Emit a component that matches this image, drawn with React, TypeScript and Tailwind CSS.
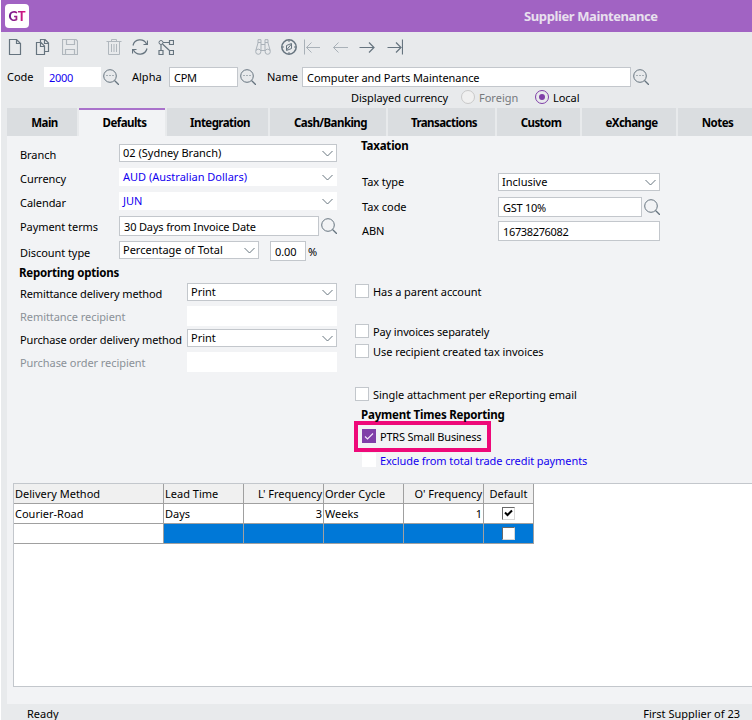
import type { ReactNode } from "react";

const Glyph = ({ children, className = "text-[#66747f]" }: { children: ReactNode; className?: string }) => (
  <svg viewBox="0 0 16 16" fill="none" stroke="currentColor" className={`h-4 w-4 shrink-0 ${className}`}>
    {children}
  </svg>
);

const SearchIcon = ({ dots = false, className = "" }: { dots?: boolean; className?: string }) => (
  <Glyph className={`text-[#66747f] ${className}`}>
    <circle cx="7" cy="7" r="6.3" />
    <path d="M11.5 11.5L16 16" strokeWidth="1.3" />
    {dots && <path d="M3.5 6.5h1M6.5 6.5h1M9.5 6.5h1" />}
  </Glyph>
);

const Label = ({ text, className = "" }: { text: string; className?: string }) => (
  <span className={`block h-4 shrink-0 leading-4 whitespace-nowrap ${className}`}>{text}</span>
);

const Heading = ({ text, className = "" }: { text: string; className?: string }) => (
  <h2 className={`h-4 text-[11.5px] leading-4 font-bold tracking-[-0.2px] whitespace-nowrap ${className}`}>{text}</h2>
);

const Select = ({ value, className = "" }: { value: string; className?: string }) => (
  <div className={`flex h-[18px] shrink-0 items-center justify-between border bg-white pr-[3px] pl-[3px] tracking-normal ${className}`}>
    <span className="leading-4 whitespace-nowrap">{value}</span>
    <svg viewBox="0 0 11 7" fill="none" stroke="#66747f" className="h-[7px] w-[11px]">
      <path d="M0.5 1L5.5 6L10.5 1" />
    </svg>
  </div>
);

const Input = ({ value = "", className = "" }: { value?: string; className?: string }) => (
  <div className={`flex h-5 shrink-0 items-center border bg-white pt-[2px] pl-1 whitespace-nowrap ${className}`}>{value}</div>
);

const Check = ({ text, className = "" }: { text: string; className?: string }) => (
  <div className={`flex h-3.5 gap-1 ${className}`}>
    <span className="h-3.5 w-3.5 shrink-0 border border-[#c3c7cc] bg-white" />
    <Label text={text} />
  </div>
);

const tabs = [
  { name: "Main", width: "w-[70px] pl-[5px]" },
  { name: "Defaults", width: "w-[86px] pl-[5px]" },
  { name: "Integration", width: "w-[101px] pl-[5px]" },
  { name: "Cash/Banking", width: "w-[116px] pl-[5px]" },
  { name: "Transactions", width: "w-[107px] pl-[5px]" },
  { name: "Custom", width: "w-[83px] pl-[5px]" },
  { name: "eXchange", width: "w-[94px] pl-[5px]" },
  { name: "Notes", width: "w-[74px] pl-[5px]" },
];

const Toolbar = () => (
  <div className="flex h-[35px] pt-[7px] pl-[6px]">
    <Glyph>
      <path d="M2.5 .5H9.5L13.5 4.5V15.5H2.5ZM9.5 .5V4.5H13.5" strokeWidth="1.2" />
    </Glyph>
    <Glyph className="ml-[11px] text-[#66747f]">
      <path d="M6.5 3.5V.5H11L14.5 4V12.5H10.5M10.5 .5V4.5H14.5M2.5 3.5H7L10.5 7V15.5H2.5ZM6.5 3.5V7.5H10.5" strokeWidth="1.2" />
    </Glyph>
    <Glyph className="ml-3 text-[#b0b7bd]">
      <path d="M.5 .5H14L15.5 2V15.5H.5ZM4.5 .5V5.5H12.5V.5M3.5 15.5V10.5H12.5V15.5" strokeWidth="1.2" />
    </Glyph>
    <Glyph className="ml-[28px] text-[#b0b7bd]">
      <path d="M.5 2.5H15.5M5.5 2.5V.5H10.5V2.5M2.5 2.5V15.5H13.5V2.5M5.5 5V13M8 5V13M10.5 5V13" />
    </Glyph>
    <Glyph className="ml-[10px] text-[#66747f]">
      <path d="M1 6.5A7.2 7.2 0 0 1 14.5 5M15.5 1.5V5.5H11.5M15 9.5A7.2 7.2 0 0 1 1.5 11M.5 14.5V10.5H4.5" strokeWidth="1.2" />
    </Glyph>
    <Glyph className="ml-[10px] text-[#66747f]">
      <circle cx="3" cy="3.5" r="2" />
      <path d="M5 3.5H11.5M11.5 1.5H15.5V5.5H11.5ZM3 5.5V11.5M1 11.5H5V15.5H1ZM4.5 5L12 12M11.5 11.5H15.5V15.5H11.5Z" strokeWidth="1.2" />
    </Glyph>
    <Glyph className="ml-[81px] text-[#a9b1b8]">
      <circle cx="3.3" cy="12.7" r="2.6" />
      <circle cx="12.7" cy="12.7" r="2.6" />
      <path d="M.8 11.5L3 4V.7H6V12M15.2 11.5L13 4V.7H10V12M6 5.5H10M6 11.5H10M3 3.5H6M10 3.5H13" />
    </Glyph>
    <Glyph className="ml-[10px] text-[#66747f]">
      <circle cx="8" cy="8" r="7.2" strokeWidth="1.5" />
      <path d="M5.5 6.5L10.5 4.5V9.5L5.5 11.5ZM5.5 11L10.5 5M8 1V3M8 13V15M1 8H3M13 8H15" />
    </Glyph>
    <Glyph className="ml-[7px] text-[#a9b1b8]">
      <path d="M.5 .5V15.5M16 8.5H2.5M7.5 3.5L2.5 8.5L7.5 13.5" />
    </Glyph>
    <Glyph className="ml-3 text-[#a9b1b8]">
      <path d="M16 8.5H1.5M6.5 3.5L1.5 8.5L6.5 13.5" />
    </Glyph>
    <Glyph className="ml-[11px] text-[#66747f]">
      <path d="M.5 8.5H15M10 3.5L15 8.5L10 13.5" strokeWidth="1.2" />
    </Glyph>
    <Glyph className="ml-3 text-[#66747f]">
      <path d="M.5 8.5H14M9 3.5L14 8.5L9 13.5M15.5 .5V15.5" strokeWidth="1.2" />
    </Glyph>
  </div>
);

const SupplierHeader = () => (
  <>
    <div className="flex h-[23px] pl-[6px]">
      <Label text="Code" className="mt-[2px] w-[37px] tracking-normal" />
      <Input value="2000" className="w-[57px] border-white tracking-[-0.3px] text-[#1200f0]" />
      <SearchIcon dots className="mt-[2px] ml-[2px]" />
      <Label text="Alpha" className="mt-[2px] ml-[13px] w-[37px] tracking-normal" />
      <Input value="CPM" className="w-[69px] border-[#c3c7cc] tracking-[-0.3px]" />
      <SearchIcon dots className="mt-[2px] ml-[2px]" />
      <Label text="Name" className="mt-[2px] ml-[11px] w-[35px]" />
      <Input value="Computer and Parts Maintenance" className="w-[329px] border-[#c3c7cc]" />
      <SearchIcon dots className="mt-[2px] ml-[2px]" />
    </div>
    <div className="flex h-[18px] pl-[350px]">
      <Label text="Displayed currency" className="w-[110px]" />
      <span className="h-3.5 w-3.5 rounded-full border border-[#c9c9c9] bg-[#f0f0f0]" />
      <Label text="Foreign" className="ml-1 w-[56px] tracking-normal text-[#76797c]" />
      <span className="flex h-3.5 w-3.5 items-center justify-center rounded-full border border-[#803fa8]">
        <span className="h-1.5 w-1.5 rounded-full bg-[#803fa8]" />
      </span>
      <Label text="Local" className="ml-1" />
    </div>
  </>
);

const GeneralFields = () => (
  <div className="w-[334px]">
    <div className="flex h-6">
      <Label text="Branch" className="mt-[3px] w-[99px]" />
      <Select value="02 (Sydney Branch)" className="w-[218px] border-[#c3c7cc]" />
    </div>
    <div className="flex h-6">
      <Label text="Currency" className="mt-[3px] w-[99px]" />
      <Select value="AUD (Australian Dollars)" className="w-[218px] border-white text-[#1200f0]" />
    </div>
    <div className="flex h-6">
      <Label text="Calendar" className="mt-[3px] w-[99px]" />
      <Select value="JUN" className="w-[218px] border-white text-[#1200f0]" />
    </div>
    <div className="flex h-[25px]">
      <Label text="Payment terms" className="mt-[3px] w-[99px]" />
      <Input value="30 Days from Invoice Date" className="w-[200px] border-[#c3c7cc] tracking-[-0.15px]" />
      <SearchIcon className="mt-[2px] ml-[2px]" />
    </div>
    <div className="flex h-6">
      <Label text="Discount type" className="mt-1 w-[99px]" />
      <Select value="Percentage of Total" className="w-[140px] border-[#c3c7cc]" />
      <Input value="0.00" className="ml-[11px] w-9 border-[#c3c7cc]" />
      <Label text="%" className="mt-[3px] ml-[2px]" />
    </div>
    <Heading text="Reporting options" className="-ml-px mb-[2px]" />
    <div className="flex h-[23px]">
      <Label text="Remittance delivery method" className="mt-[3px] w-[167px] tracking-[-0.13px]" />
      <Select value="Print" className="w-[150px] border-[#c3c7cc]" />
    </div>
    <div className="flex h-[23px]">
      <Label text="Remittance recipient" className="mt-[3px] w-[167px] text-[#8b9198]" />
      <Input className="w-[150px] border-white" />
    </div>
    <div className="flex h-[23px]">
      <Label text="Purchase order delivery method" className="mt-[3px] w-[167px] tracking-[-0.13px]" />
      <Select value="Print" className="w-[150px] border-[#c3c7cc]" />
    </div>
    <div className="flex h-[23px]">
      <Label text="Purchase order recipient" className="mt-[3px] w-[167px] text-[#8b9198]" />
      <Input className="w-[150px] border-white" />
    </div>
  </div>
);

const TaxAndReporting = () => (
  <div className="w-[320px]">
    <div className="flex h-[140px] flex-col pl-[7px]">
      <Heading text="Taxation" className="-mt-[6px]" />
      <div className="mt-[19px] flex h-6">
        <Label text="Tax type" className="mt-px ml-px w-[136px]" />
        <Select value="Inclusive" className="w-[162px] border-[#c3c7cc]" />
      </div>
      <div className="flex h-6">
        <Label text="Tax code" className="mt-[2px] ml-px w-[136px]" />
        <Input value="GST 10%" className="w-[144px] border-[#c3c7cc] tracking-[-0.25px]" />
        <SearchIcon className="mt-[2px] ml-[2px]" />
      </div>
      <div className="flex h-6">
        <Label text="ABN" className="mt-[2px] ml-px w-[136px]" />
        <Input value="16738276082" className="w-[162px] border-[#c3c7cc] tracking-[-0.35px]" />
      </div>
    </div>
    <div className="pl-px">
      <Check text="Has a parent account" />
      <Check text="Pay invoices separately" className="mt-[26px] tracking-[-0.13px]" />
      <Check text="Use recipient created tax invoices" className="mt-[6px]" />
      <Check text="Single attachment per eReporting email" className="mt-[29px]" />
    </div>
    <Heading text="Payment Times Reporting" className="mt-[6px] ml-[7px]" />
    <div className="-mt-[2px] flex h-[31px] w-[137px] gap-1 border-4 border-[#ee0979] pt-1 pl-1">
      <span className="flex h-3.5 w-3.5 shrink-0 items-center justify-center bg-[#803fa8]">
        <svg viewBox="0 0 10 10" fill="none" stroke="#f3e6fa" strokeWidth="1.2" className="h-2.5 w-2.5">
          <path d="M1 5.5L3.5 8L9 2.5" />
        </svg>
      </span>
      <Label text="PTRS Small Business" className="tracking-[-0.2px]" />
    </div>
    <div className="mt-px flex gap-1 pl-2">
      <span className="h-3.5 w-3.5 shrink-0 bg-white" />
      <Label text="Exclude from total trade credit payments" className="tracking-[-0.08px] text-[#1200f0]" />
    </div>
  </div>
);

const ClassicCheck = ({ checked = false }: { checked?: boolean }) => (
  <span className="mx-auto flex h-[13px] w-[13px] items-center justify-center border border-t-[#696969] border-r-[#d8d8d8] border-b-[#d8d8d8] border-l-[#696969] bg-white">
    {checked && (
      <svg viewBox="0 0 9 9" fill="none" stroke="#000" strokeWidth="2" className="h-[9px] w-[9px]">
        <path d="M1 3.5L3.5 6L8 1.5" />
      </svg>
    )}
  </span>
);

const DeliveryGrid = () => {
  const cell = "flex h-5 items-center border-r border-b border-[#a0a0a0] whitespace-nowrap";
  const textCell = `${cell} pt-[2px] pl-px`;
  const numberCell = `${cell} justify-end pt-[2px] pr-px`;
  const columns = "grid w-[520px] grid-cols-[150px_80px_80px_80px_80px_50px]";

  return (
    <div className="ml-[6px] h-[204px] border border-r-0 border-[#c3c7cc] bg-white tracking-normal">
      <div className={`${columns} bg-[#f0f0f0]`}>
        <div className={textCell}>Delivery Method</div>
        <div className={textCell}>Lead Time</div>
        <div className={numberCell}>L' Frequency</div>
        <div className={textCell}>Order Cycle</div>
        <div className={numberCell}>O' Frequency</div>
        <div className={`${cell} justify-center pt-[2px]`}>Default</div>
      </div>
      <div className={columns}>
        <div className={textCell}>Courier-Road</div>
        <div className={textCell}>Days</div>
        <div className={numberCell}>3</div>
        <div className={textCell}>Weeks</div>
        <div className={numberCell}>1</div>
        <div className={cell}>
          <ClassicCheck checked />
        </div>
      </div>
      <div className={columns}>
        <div className={cell} />
        <div className={`${cell} bg-[#0078d7]`} />
        <div className={`${cell} bg-[#0078d7]`} />
        <div className={`${cell} bg-[#0078d7]`} />
        <div className={`${cell} bg-[#0078d7]`} />
        <div className={`${cell} bg-[#0078d7]`}>
          <ClassicCheck />
        </div>
      </div>
    </div>
  );
};

export default function App() {
  return (
    <div className="h-[720px] w-[752px] overflow-hidden border-l border-white bg-[#e8eaec] font-['Noto_Sans',sans-serif] text-[11px] tracking-[-0.06px] text-black">
      <header className="flex h-8 items-center bg-[#a163c3] pl-1">
        <div className="flex h-6 w-6 items-center justify-center rounded bg-white">
          <span className="bg-linear-to-r from-[#65148f] to-[#e5007d] bg-clip-text font-['Lato',sans-serif] text-[13px] leading-4 font-black text-transparent">
            GT
          </span>
        </div>
        <h1 className="ml-[495px] text-[13px] leading-4 font-bold tracking-[-0.4px] whitespace-nowrap text-[#e8e0ee]">
          Supplier Maintenance
        </h1>
      </header>
      <Toolbar />
      <SupplierHeader />
      <nav className="ml-[6px] flex h-7 gap-[2px]">
        {tabs.map(({ name, width }) => (
          <div
            key={name}
            className={`flex shrink-0 items-center justify-center border-t-2 text-[11.5px] font-bold tracking-[-0.55px] ${width} ${
              name === "Defaults" ? "border-[#a972cb] bg-[#f2f3f5]" : "border-[#dadde0] bg-[#dadde0]"
            }`}
          >
            {name}
          </div>
        ))}
      </nav>
      <main className="ml-[6px] h-[568px] bg-[#f2f3f5]">
        <div className="flex h-[347px] pt-2 pl-[13px]">
          <GeneralFields />
          <TaxAndReporting />
        </div>
        <DeliveryGrid />
      </main>
      <footer className="flex justify-between pt-[2px] pr-3 pl-[26px] leading-4 tracking-normal">
        <span>Ready</span>
        <span>First Supplier of 23</span>
      </footer>
    </div>
  );
}
